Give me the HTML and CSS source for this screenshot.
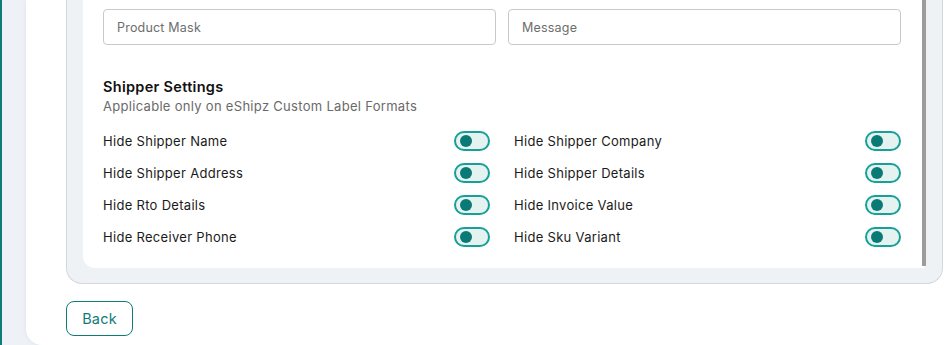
FILE: index.html
```html
<!DOCTYPE html>
<html lang="en">
<head>
    <meta charset="UTF-8">
    <title>Label Settings</title>
    <meta name="viewport" content="width=device-width, initial-scale=1.0">
    <link rel="stylesheet" href="styles.css">
</head>
<body>
    <div class="rail"></div>
    <div class="page">
        <div class="card">
            <div class="panel">
                <div class="scroll-box">
                    <div class="scroll-content">
                        <div class="input-row">
                            <input class="field" type="text" placeholder="Product Mask">
                            <input class="field" type="text" placeholder="Message">
                        </div>

                        <!-- Shipper settings -->
                        <div class="section-title">Shipper Settings</div>
                        <div class="section-sub">Applicable only on eShipz Custom Label Formats</div>
                        <div class="toggle-grid">
                            <div class="toggle-row"><span>Hide Shipper Name</span><span class="switch"><span class="knob"></span></span></div>
                            <div class="toggle-row"><span>Hide Shipper Company</span><span class="switch"><span class="knob"></span></span></div>
                            <div class="toggle-row"><span>Hide Shipper Address</span><span class="switch"><span class="knob"></span></span></div>
                            <div class="toggle-row"><span>Hide Shipper Details</span><span class="switch"><span class="knob"></span></span></div>
                            <div class="toggle-row"><span>Hide Rto Details</span><span class="switch"><span class="knob"></span></span></div>
                            <div class="toggle-row"><span>Hide Invoice Value</span><span class="switch"><span class="knob"></span></span></div>
                            <div class="toggle-row"><span>Hide Receiver Phone</span><span class="switch"><span class="knob"></span></span></div>
                            <div class="toggle-row"><span>Hide Sku Variant</span><span class="switch"><span class="knob"></span></span></div>
                        </div>
                    </div>
                    <div class="scrollbar"></div>
                </div>
            </div>
            <button class="btn-back">Back</button>
        </div>
    </div>
</body>
</html>
```

FILE: styles.css
```css
body {
    margin: 0;
    height: 345px;
    overflow: hidden;
    font-family: 'Inter', 'Noto Sans', sans-serif;
    background: #eef1f5;
    color: #1b1b1b;
    display: flex;
}
.rail {
    width: 2px;
    background: #0f7c79;
    flex-shrink: 0;
}
.page {
    flex: 1;
    padding-left: 24px;
    display: flex;
}
.card {
    flex: 1;
    background: #fff;
    border-radius: 0 0 0 16px;
    box-shadow: 0 0 5px rgba(30, 40, 60, 0.07);
    padding: 0 6px 9px 40px;
    display: flex;
    flex-direction: column;
    align-items: flex-start;
}
.panel {
    align-self: stretch;
    background: #eff2f5;
    border: 1px solid #d3d7de;
    border-top: none;
    border-radius: 0 0 16px 16px;
    padding: 0 16px 15px 16px;
}
.scroll-box {
    background: #fff;
    border-radius: 0 0 4px 12px;
    display: flex;
}
.scroll-content {
    flex: 1;
    padding: 9px 21px 15px 20px;
}
.scrollbar {
    width: 4px;
    background: #9c9c9c;
    margin-bottom: 2px;
}
.input-row {
    display: grid;
    grid-template-columns: 1fr 1fr;
    gap: 12px;
}
.field {
    height: 36px;
    box-sizing: border-box;
    border: 1px solid #c9c9c9;
    border-radius: 4px;
    padding: 0 13px;
    font-family: inherit;
    font-size: 12.5px;
    letter-spacing: 0.2px;
    color: #333;
    outline: none;
}
.field::placeholder {
    color: #6d6d6d;
}
.section-title {
    margin-top: 32px;
    font-size: 14.5px;
    font-weight: 600;
    letter-spacing: 0.3px;
    color: #111;
    line-height: 20px;
}
.section-sub {
    font-size: 13px;
    letter-spacing: 0.3px;
    color: #6a6a6a;
    line-height: 18px;
    margin-bottom: 10px;
}
.toggle-grid {
    display: grid;
    grid-template-columns: 1fr 1fr;
    column-gap: 24px;
}
.toggle-row {
    height: 32px;
    display: flex;
    align-items: center;
    justify-content: space-between;
    font-size: 13px;
    letter-spacing: 0.3px;
    color: #1b1b1b;
}
.switch {
    width: 36px;
    height: 20px;
    box-sizing: border-box;
    border: 2px solid #16a097;
    border-radius: 10px;
    background: #e4f2f0;
    display: flex;
    align-items: center;
    padding-left: 4px;
}
.knob {
    width: 12px;
    height: 12px;
    border-radius: 50%;
    background: #0b7a76;
}
.btn-back {
    margin-top: 17px;
    width: 67px;
    height: 36px;
    background: #fff;
    border: 1px solid #0f7c79;
    border-radius: 8px;
    color: #0f7c79;
    font-family: inherit;
    font-size: 14.5px;
    letter-spacing: 0.2px;
    cursor: pointer;
}
```
